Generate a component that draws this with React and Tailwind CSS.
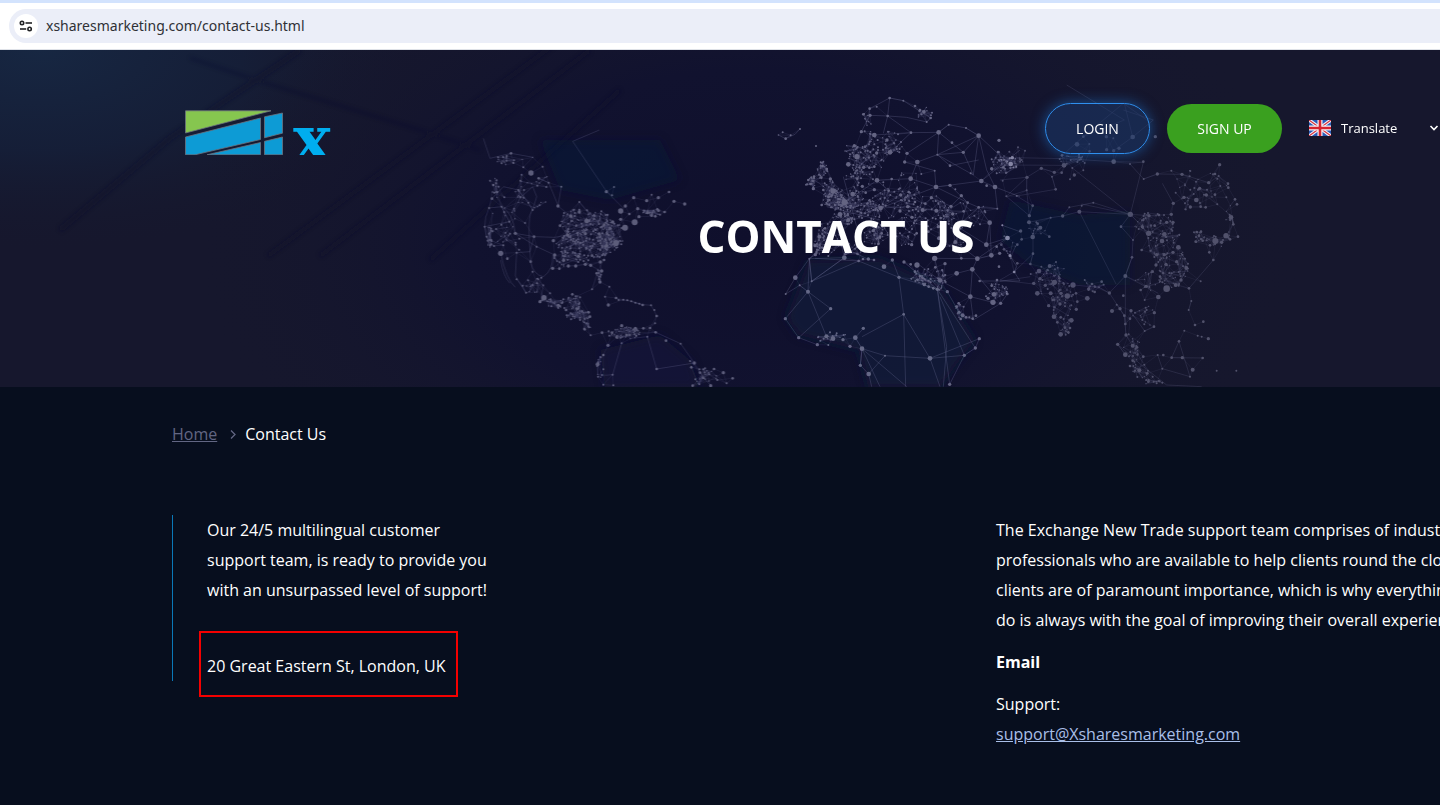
import React from "react";

/* Network map: each region has its own origin and is drawn at three units per pixel. */
const REGIONS = [
  {
    id: "americas",
    origin: [470, 30],
    tone: 0.4,
    reach: 52,
    nodes:
      "123,220,4 183,279,8 130,248,3 110,228,3 95,250,3 160,262,3 206,295,4 218,260,3 236,308,3 274,320,3 188,232,2 60,302,3 70,315,4 78,310,3 66,356,4 145,330,3 152,352,3 175,368,3 188,390,3 103,352,3 95,380,3 57,384,3 68,400,2 44,440,3 50,470,3 60,496,3 72,498,3 92,520,8 112,536,4 140,518,3 136,460,5 118,425,3 148,476,3 192,470,4 100,496,3 200,500,3 182,545,4 188,575,3 140,598,3 158,617,3 168,638,3 201,610,3 222,653,8 210,665,5 240,640,3 265,676,5 307,643,4 330,652,3 288,690,4 320,686,4 356,697,4 360,710,4 344,748,4 330,720,3 362,766,3 396,758,4 264,378,5 302,408,5 328,396,5 350,423,7 328,366,3 270,437,4 293,465,5 250,482,5 254,525,5 248,565,5 268,566,4 281,541,5 295,558,5 317,558,5 325,529,5 346,553,5 362,556,5 391,546,5 395,573,5 380,580,4 390,606,5 402,540,4 366,527,4 388,462,5 346,461,5 402,434,4 428,426,5 452,418,5 410,497,5 438,489,9 465,443,9 494,427,9 452,393,8 466,378,5 478,402,4 507,410,5 409,335,5 432,321,3 426,346,3 491,353,5 530,362,5 545,344,3 565,353,5 597,336,4 612,364,5 644,372,5 503,386,5 533,398,5 545,407,4 556,409,4 566,392,4 584,396,4 562,388,4 570,404,3 366,628,3 418,620,3 405,650,3 415,675,5 438,654,4 446,660,3 460,659,3 472,661,3 484,664,3 496,668,3 508,671,3 518,675,4 543,676,3 553,690,3 560,708,4 555,730,3 455,737,5 496,745,5 520,745,4 540,744,4 557,757,4 426,758,4 414,796,5 440,772,4 470,765,4 588,782,4 632,791,3 673,849,5 660,843,3 664,862,4 690,878,4 732,867,4 760,878,5 788,895,4 722,917,5 702,895,3 742,900,3 770,910,3 668,917,4 383,853,6 400,825,4 400,868,3 384,890,3 400,914,3 428,884,3 430,916,3 560,867,4 532,770,3 455,790,3",
    clouds:
      "120,238,42,18,14 75,330,14,36,10 345,425,84,40,75 350,490,95,45,120 420,465,45,45,60 300,535,60,25,30 60,470,10,34,14 190,610,34,28,14 245,670,36,18,20 305,670,28,28,22 325,705,42,16,26 350,730,14,22,12 460,760,50,20,34 545,395,34,12,14 388,585,10,22,12 705,890,45,26,20 390,860,12,36,10 120,450,60,70,24 190,330,60,60,26",
    lines:
      "M388 150L308 184L410 335L460 385 M265 378L236 308L206 295 M192 470L254 472L293 465 M182 545Q170 400 188 390L175 368L145 330 M182 545Q190 585 220 590Q250 570 248 525 M57 384Q30 440 60 496 M95 380Q130 400 136 460L192 470 M92 520Q110 600 136 622 M140 518L136 588L168 638 M92 540Q100 590 120 610 M532 770L560 867L673 849L632 791L557 757 M455 790L428 884 M40 175L60 235L123 220L190 232 M152 352L188 320L200 350L188 390 M66 356L100 320L145 330 M328 366L362 405 M274 320L264 378 M57 384L95 380L118 425L44 440 M192 470L180 515L140 518 M136 460L200 500L254 525",
  },
  {
    id: "europe-africa",
    origin: [760, 30],
    tone: 0.44,
    reach: 46,
    nodes:
      "389,54,4 430,62,3 350,80,3 330,106,5 310,103,4 329,86,4 383,108,4 465,78,4 492,96,5 512,114,4 500,126,3 480,90,4 343,165,7 304,155,5 283,197,5 291,230,8 265,253,7 311,262,5 343,260,4 328,263,4 350,219,5 390,217,7 381,180,5 434,246,5 441,220,5 472,246,7 453,158,4 536,157,7 566,134,3 618,144,3 656,167,7 717,181,5 610,217,5 532,224,3 576,188,4 524,272,3 570,257,4 452,296,7 395,297,4 351,301,7 292,296,4 528,321,7 570,316,5 604,347,5 514,353,5 586,328,3 632,280,3 664,303,7 705,321,7 680,317,4 695,266,5 752,252,7 757,233,5 714,216,4 740,245,4 730,262,4 307,319,5 317,338,4 343,329,5 386,332,4 422,345,5 446,336,4 362,384,7 278,342,7 254,367,9 219,333,8 240,403,7 265,420,6 211,297,5 200,267,4 188,258,4 182,247,3 184,293,4 190,330,4 160,326,5 152,312,4 145,300,4 162,290,4 205,350,4 185,375,4 208,360,4 443,380,5 420,393,5 456,412,5 465,366,4 496,371,4 488,390,6 529,392,6 573,379,5 623,368,4 656,382,4 712,386,3 611,394,4 578,402,5 542,414,4 689,428,7 742,474,7 679,494,7 710,500,4 727,436,3 537,475,6 586,486,6 600,445,4 535,440,5 455,494,5 470,460,4 505,455,4 694,526,7 652,536,7 719,520,5 750,527,4 604,535,4 555,551,5 524,535,8 471,555,8 452,553,4 432,546,5 397,540,5 372,560,7 325,537,5 342,540,4 309,537,4 296,543,4 253,533,7 205,528,3 166,524,5 148,536,3 165,497,5 178,470,6 195,445,4 340,452,5 360,470,4 355,492,4 365,460,4 417,592,5 540,601,7 526,562,4 590,580,7 637,568,7 717,560,4 763,576,4 659,603,4 562,635,5 532,628,5 493,614,5 506,620,4 520,625,4 480,588,4 465,575,4 631,650,7 684,655,5 702,643,7 699,667,8 722,670,5 742,642,4 695,617,4 711,600,4 597,697,5 590,680,4 596,670,4 608,706,6 618,712,4 602,717,4 628,712,3 638,716,4 648,707,4 106,593,7 119,616,3 77,642,3 144,635,6 155,604,3 212,686,5 76,716,5 116,773,5 172,794,5 199,769,6 219,776,7 249,779,5 286,773,7 270,799,5 306,806,7 310,745,5 205,795,3 181,782,3 230,760,3 210,757,3 301,856,5 326,882,7 375,827,3 510,835,7 613,826,5 646,804,5 658,776,5 431,703,4 569,913,5 120,147,3 77,176,4 68,157,3 55,165,2 92,166,3 168,198,3",
    clouds:
      "185,270,18,28,18 153,310,16,20,18 212,330,26,28,28 225,368,40,26,40 265,350,50,36,44 310,390,60,36,54 320,240,54,44,40 275,215,22,30,16 330,180,32,38,18 395,190,34,38,28 300,290,46,30,24 210,470,50,48,50 180,500,22,26,22 345,465,40,40,36 400,370,70,50,36 500,390,70,50,46 445,320,80,44,22 730,250,42,38,26 490,590,40,28,26 535,600,28,34,24 320,120,16,22,8 492,100,28,22,12 245,420,34,24,26 275,510,30,20,16 705,640,36,30,16 600,690,16,24,8 610,400,70,56,22 430,450,46,50,26 225,772,52,16,12 560,460,60,56,20",
    lines:
      "M120 147L105 163L77 176L55 165 M329 86L389 54L383 108L330 106 M389 54L430 62L512 114L500 126L440 112L383 108L370 160 M383 108L453 158L536 157L566 134L618 144L656 167 M304 155L330 106 M441 220L536 157L532 224L656 167 M472 246L532 224L570 257L656 240 M536 157L610 217L640 285 M656 167L610 217L532 224L640 285 M656 167L680 270L705 321 M656 167L740 245 M656 167L640 285 M343 165L453 158L390 217 M434 246L524 272L528 321L452 296L472 246 M452 296L351 301L386 332L362 384L528 321L664 303L780 210 M664 303L705 321L780 350 M528 321L623 368L656 382L712 386 M705 321L712 386 M604 347L573 379L514 353 M570 316L623 368L586 486 M656 382L689 428L679 494 M656 382L580 450 M689 428L694 526L652 536L637 568 M742 474L679 494L600 445 M727 436L780 455 M586 486L652 536L742 474 M750 527L770 560L763 576L780 603L659 603 M148 536L106 593L77 642L119 616L144 635L76 716L116 773L172 794 M148 536L155 604L148 536L144 635 M166 524L148 536L253 533L155 604L296 543L417 592L397 540 M296 543L165 535 M144 635L212 686L116 773 M144 635L199 769 M253 533L155 604 M417 592L431 703L306 770 M417 592L532 628 M431 703L437 920 M431 703L510 835L540 920 M532 628L569 913L613 826L540 650 M532 628L646 804L658 776L510 835L375 827L306 806L301 856L326 882L375 827 M306 806L440 920 M306 806L360 920 M326 882L335 920 M301 856L306 806L286 773L310 745 M532 628L560 800L550 920 M510 835L613 826L646 804 M540 601L631 650L699 667 M590 580L637 568L631 650L640 720L722 670L742 642 M637 568L699 643 M562 635L597 697 M478 555L540 601L524 535L652 536 M432 546L532 628 M250 290L290 440M180 470L330 540M200 380L360 420M254 367L362 384L420 345M254 367L351 301M362 384L443 380L529 392L611 394",
  },
  {
    id: "asia",
    origin: [1000, 30],
    tone: 0.32,
    reach: 50,
    nodes:
      "32,252,7 37,233,5 12,240,4 48,258,3 60,245,3 75,212,3 54,202,3 28,215,3 8,302,3 81,292,5 80,331,3 19,349,3 50,348,3 124,265,5 163,277,5 192,256,7 185,278,4 156,290,3 167,328,4 210,298,3 223,285,5 217,264,3 186,226,4 231,193,7 250,170,4 269,214,4 268,192,3 320,209,5 341,212,5 357,205,5 319,170,5 340,175,3 398,171,7 466,170,5 341,245,7 250,271,3 430,245,4 431,297,3 472,282,5 514,272,3 546,283,5 390,252,3 88,407,5 98,377,4 87,427,6 62,453,5 113,431,4 121,443,6 148,470,4 152,413,3 188,408,5 208,382,3 238,395,6 245,377,3 280,368,3 23,474,7 4,494,4 65,478,4 98,471,7 52,494,4 30,527,5 52,550,4 42,576,4 99,521,4 7,436,3 12,508,4 91,552,4 117,573,7 149,558,6 168,546,3 101,610,5 92,582,3 120,596,5 163,607,8 136,616,5 219,615,8 178,595,4 112,640,7 152,640,6 183,640,5 202,648,8 180,672,5 262,655,7 158,660,4 146,677,5 228,640,4 232,665,4 229,688,5 266,627,5 284,636,4 254,600,3 162,710,7 214,721,7 182,712,4 195,743,4 205,757,4 182,763,7 210,744,4 172,727,4 305,605,4 328,639,5 276,612,4 297,622,3 336,693,6 360,686,5 350,674,3 373,707,4 393,692,5 390,716,4 376,732,4 370,647,4 376,588,6 396,532,4 399,480,3 363,440,4 391,403,8 447,407,5 427,440,5 446,460,8 464,437,4 493,463,7 486,483,7 500,427,5 519,427,5 514,403,5 477,405,4 520,370,5 552,352,5 589,360,7 571,381,5 599,325,5 626,308,5 619,345,5 645,282,4 645,344,4 659,254,5 684,311,4 685,323,4 617,382,4 602,380,4 693,412,7 700,433,4 711,373,4 705,358,4 714,470,4 590,456,4 597,467,4 603,455,4 608,482,4 587,485,4 646,483,9 678,467,8 630,496,4 628,517,4 640,540,4 665,487,5 690,478,4 535,502,7 519,517,5 470,524,5 493,524,5 425,510,4 468,555,5 498,553,5 530,545,5 559,564,6 500,626,10 527,615,6 543,600,5 567,625,4 602,604,3 480,590,4 458,575,4 438,619,5 422,630,4 475,651,7 434,660,3 463,698,5 462,740,4 434,753,3 574,663,3 566,690,3 610,725,4 585,735,4 553,752,3 625,776,5 593,767,3 605,770,3 537,784,4 547,833,5 515,833,4 490,825,4 473,825,3 487,866,3 578,869,6 570,890,3 608,834,4 378,765,5 353,793,5 376,824,7 398,797,6 411,802,4 398,842,4 390,858,4 418,871,6 442,880,4 430,830,4 445,905,4 470,910,3 458,890,3 650,872,3 709,872,3",
    clouds:
      "30,245,40,22,18 10,632,18,16,10 220,240,46,22,20 155,600,54,50,34 185,660,38,60,32 195,740,20,26,12 460,440,60,44,36 500,500,60,50,36 510,570,54,54,40 545,560,20,40,16 440,600,40,34,16 597,468,18,22,10 655,480,40,20,14 690,420,16,46,12 630,330,56,50,18 395,800,24,50,18 420,870,30,26,16 460,905,28,10,10 280,620,34,16,8 430,710,36,36,14 110,450,40,24,8 20,500,30,40,10 550,360,40,30,10 560,300,50,30,8",
    lines:
      "M0 232L192 236L341 245L431 247 M0 255L192 256 M80 292L124 265L163 277 M19 349L88 407L98 377L50 348L167 328L156 290 M80 292L80 331L88 407 M0 300L80 292L19 349 M20 350L80 331 M87 427L152 413L188 408L238 395L390 403L280 368L208 382L188 408 M217 264L391 403L245 372 M238 395L348 612 M391 403L430 247 M391 403L363 440L399 480L396 532L376 588L328 639L297 622L219 615 M396 532L376 588L376 732 M99 471L99 521L91 552 M0 600L100 612 M0 604L91 590 M0 600L42 576L99 521 M390 252L431 297L472 282L546 283L626 308 M487 310L520 370 M328 639L373 707L378 765L430 850 M376 588L475 640 M390 692L434 753L462 740 M187 226L250 170L373 120L200 15 M341 212L398 171L373 70 M398 171L460 120L370 90 M250 170L370 70L440 120 M473 825L487 866L570 890L537 784L515 833L608 834 M376 824L353 793L430 860L500 915L605 920 M566 690L574 663 M391 403L447 407L446 460 M391 403L446 460L500 427 M640 540L567 625",
  },
];

function seeded(seed) {
  let s = seed;
  return () => {
    s = (s * 16807) % 2147483647;
    return s / 2147483647;
  };
}

function buildRegion(region, index) {
  const rand = seeded(97 + index * 31);
  const nodes = region.nodes.split(" ").map((n) => n.split(",").map(Number));
  const specks = [];
  region.clouds.split(" ").forEach((c) => {
    const [cx, cy, rx, ry, count] = c.split(",").map(Number);
    for (let i = 0; i < count; i++) {
      const a = rand() * Math.PI * 2;
      const d = Math.sqrt(rand());
      specks.push([
        Math.round(cx + Math.cos(a) * rx * d),
        Math.round(cy + Math.sin(a) * ry * d),
        rand() > 0.6 ? 3 : 2,
      ]);
    }
  });
  const all = nodes.concat(specks);
  let links = "";
  all.forEach((a, i) => {
    let made = 0;
    for (let j = i + 1; j < all.length && made < 2; j++) {
      const b = all[j];
      const dist = Math.hypot(a[0] - b[0], a[1] - b[1]);
      if (dist < region.reach && rand() > 0.35) {
        links += `M${a[0]} ${a[1]}L${b[0]} ${b[1]}`;
        made++;
      }
    }
  });
  return { ...region, nodes, specks, links };
}

const MAP = REGIONS.map(buildRegion);

function HeroArt() {
  return (
    <svg
      className="absolute inset-0 h-full w-full"
      viewBox="0 0 1672 337"
      preserveAspectRatio="xMinYMin slice"
      aria-hidden="true"
    >
      <defs>
        <radialGradient id="corner" cx="0" cy="0" r="1" gradientUnits="userSpaceOnUse" gradientTransform="translate(40 0) scale(400 200)">
          <stop offset="0" stopColor="#172742" />
          <stop offset="0.5" stopColor="#15203a" stopOpacity="0.8" />
          <stop offset="1" stopColor="#16182d" stopOpacity="0" />
        </radialGradient>
        <radialGradient id="deep" cx="0" cy="0" r="1" gradientUnits="userSpaceOnUse" gradientTransform="translate(750 190) scale(560 340)">
          <stop offset="0" stopColor="#0f0f2c" />
          <stop offset="0.5" stopColor="#11122f" />
          <stop offset="1" stopColor="#16172d" stopOpacity="0" />
        </radialGradient>
        <filter id="soft" x="-20%" y="-20%" width="140%" height="140%">
          <feGaussianBlur stdDeviation="2" />
        </filter>
        <filter id="softer" x="-20%" y="-20%" width="140%" height="140%">
          <feGaussianBlur stdDeviation="5" />
        </filter>
      </defs>
      <rect width="1672" height="337" fill="#16172d" />
      <rect width="1672" height="337" fill="url(#corner)" />
      <rect width="1672" height="337" fill="url(#deep)" />
      <g filter="url(#soft)" stroke="#0f102a" fill="none" opacity="0.45">
        <path d="M300 0L170 88L60 180" strokeWidth="5" />
        <path d="M190 8L262 32L420 80L480 100" strokeWidth="2" />
        <path d="M560 -10L268 206" strokeWidth="4" />
        <path d="M590 0L320 206" strokeWidth="4" />
        <path d="M620 40L430 210" strokeWidth="4" />
      </g>
      <g fill="#0f1a3b" filter="url(#softer)">
        <path d="M808 210L880 208L940 235L975 290L940 337H868L858 300L798 285L786 268Z" opacity="0.6" />
        <path d="M1010 150L1080 165L1130 160L1130 235L1080 235L1030 215L1000 190Z" opacity="0.35" />
        <path d="M600 300L660 285L690 310L700 337H605Z" opacity="0.5" />
        <path d="M540 90L660 90L680 130L610 150L560 140Z" opacity="0.35" />
      </g>
      {MAP.map((m) => (
        <g
          key={m.id}
          transform={`translate(${m.origin[0]} ${m.origin[1]}) scale(0.33333)`}
          opacity={m.tone}
        >
          <path d={m.links} stroke="#a9a9dc" strokeWidth="1.8" fill="none" opacity="0.34" />
          <path d={m.lines} stroke="#b4b4e4" strokeWidth="2.6" fill="none" opacity="0.46" />
          {m.specks.map(([x, y, r], i) => (
            <circle key={i} cx={x} cy={y} r={r} fill="#c9c9ea" />
          ))}
          {m.nodes.map(([x, y, r], i) => (
            <circle key={i} cx={x} cy={y} r={r} fill="#d0d0ee" />
          ))}
        </g>
      ))}
    </svg>
  );
}

function TuneIcon() {
  return (
    <svg width="14" height="12" viewBox="0 0 14 12" fill="none" stroke="#202124" strokeWidth="1.6" aria-hidden="true">
      <circle cx="3" cy="3" r="1.7" />
      <path d="M6.5 3H13" />
      <circle cx="10.6" cy="9" r="1.7" />
      <path d="M1 9H7.2" />
    </svg>
  );
}

function BrowserBar() {
  return (
    <div className="border-t-[3px] border-b border-t-[#d3e3fd] border-b-[#dfe2e8] bg-white pt-[6px] pb-[6px] pl-[9px]">
      <div className="flex h-[34px] items-center gap-2 rounded-l-full bg-[#ebeef8] pl-[5px]">
        <button type="button" aria-label="View site information" className="grid size-6 place-items-center rounded-full bg-white">
          <TuneIcon />
        </button>
        <input
          type="text"
          aria-label="Address"
          defaultValue="xsharesmarketing.com/contact-us.html"
          className="h-6 flex-1 bg-transparent pb-[2px] font-['Noto_Sans',sans-serif] text-sm text-[#2f3136] outline-none"
        />
      </div>
    </div>
  );
}

function Logo() {
  return (
    <a href="#home" aria-label="X home" className="mt-[7px] flex h-[45px] items-start gap-[10px] overflow-hidden">
      <svg width="98" height="45" viewBox="0 0 98 45" aria-hidden="true">
        <g stroke="#6d7480" strokeWidth="0.8">
          <path d="M0.5 0.8H86L0.5 23Z" fill="#86c64f" />
          <path d="M0.5 27L75.5 8V29.5L10 44.8H0.5Z" fill="#0d9bd5" />
          <path d="M79.5 6.8L97.5 3V23.2L79.5 27.8Z" fill="#0d9bd5" />
          <path d="M22 44.8L75.5 32.5V44.8Z" fill="#0d9bd5" />
          <path d="M79.5 31.3L97.5 27V44.8H79.5Z" fill="#0d9bd5" />
        </g>
      </svg>
      <span className="font-['DejaVu_Serif',serif] text-[64px] leading-[58px] font-bold text-[#00aeef]">x</span>
    </a>
  );
}

function UkFlag() {
  return (
    <svg width="22" height="16" viewBox="0 0 22 16" aria-hidden="true">
      <rect width="22" height="16" fill="#2a5bb8" />
      <path d="M0 0L22 16M22 0L0 16" stroke="#f4f4f8" strokeWidth="3.4" />
      <path d="M0 0L22 16M22 0L0 16" stroke="#d8333f" strokeWidth="1.2" />
      <path d="M11 0V16M0 8H22" stroke="#f4f4f8" strokeWidth="5" />
      <path d="M11 0V16M0 8H22" stroke="#d8232f" strokeWidth="2.6" />
    </svg>
  );
}

function Header() {
  return (
    <header className="flex items-start justify-between pt-[53px] pl-[13px]">
      <Logo />
      <nav className="flex w-[455px] items-center" aria-label="Account">
        <button
          type="button"
          className="h-[51px] w-[105px] rounded-full border border-[#2f8fee] bg-[#1b3c70]/50 text-sm font-medium text-white shadow-[0_0_14px_rgba(31,120,210,0.6)]"
        >
          LOGIN
        </button>
        <button type="button" className="ml-[17px] h-[49px] w-[115px] rounded-full bg-[#3aa01f] text-sm font-medium text-white">
          SIGN UP
        </button>
        <label className="mb-[2px] ml-[27px] flex items-center">
          <UkFlag />
          <select aria-label="Language" className="w-[120px] appearance-none bg-transparent pl-[10px] text-[13px] font-medium text-white outline-none">
            <option>Translate</option>
          </select>
          <svg className="pointer-events-none -ml-[22px]" width="10" height="8" viewBox="0 0 10 8" fill="none" stroke="#fff" strokeWidth="1.6" aria-hidden="true">
            <path d="M1.5 2L5 5.5L8.5 2" />
          </svg>
        </label>
      </nav>
    </header>
  );
}

export default function App() {
  return (
    <div className="min-h-screen overflow-x-hidden bg-[#070e1e] font-['Open_Sans','Noto_Sans',sans-serif] text-base leading-[30px] text-white">
      <BrowserBar />
      <div className="min-w-[1672px]">
        <div className="relative h-[337px] overflow-hidden">
          <HeroArt />
          <div className="relative mx-auto max-w-[1328px]">
            <Header />
            <h1 className="mt-[50px] text-center text-[44px] leading-[62px] font-bold">CONTACT US</h1>
          </div>
        </div>
        <main className="mx-auto max-w-[1328px] pt-8 pb-10">
          <nav aria-label="Breadcrumb" className="flex items-center">
            <a href="#home" className="text-[#626683] underline">Home</a>
            <svg className="mr-2 ml-3" width="8" height="10" viewBox="0 0 8 10" fill="none" stroke="#626683" strokeWidth="1.3" aria-hidden="true">
              <path d="M2 1.5L6 5.5L2 9.5" />
            </svg>
            <span>Contact Us</span>
          </nav>
          <div className="mt-[66px] flex items-start">
            <section className="w-[824px]">
              <div className="border-l border-[#0a78b8] pl-[34px]">
                <p className="w-[290px]">
                  Our 24/5 multilingual customer support team, is ready to provide you with an unsurpassed level of support!
                </p>
                <address className="relative mt-[46px] w-fit not-italic">
                  20 Great Eastern St, London, UK
                  <span className="pointer-events-none absolute -top-5 -right-3 -bottom-4 -left-2 border-2 border-[#f40000]" />
                </address>
              </div>
            </section>
            <section className="flex flex-1 flex-col gap-3">
              <p>
                The Exchange New Trade support team comprises of industry professionals who are available to help clients round the clock. Our clients are of paramount importance, which is why everything we do is always with the goal of improving their overall experience.
              </p>
              <h2 className="font-bold">Email</h2>
              <p className="flex flex-col items-start">
                <span>Support:</span>
                <a href="mailto:support@Xsharesmarketing.com" className="text-[#a9bfe8] underline">
                  support@Xsharesmarketing.com
                </a>
              </p>
            </section>
          </div>
        </main>
      </div>
    </div>
  );
}
